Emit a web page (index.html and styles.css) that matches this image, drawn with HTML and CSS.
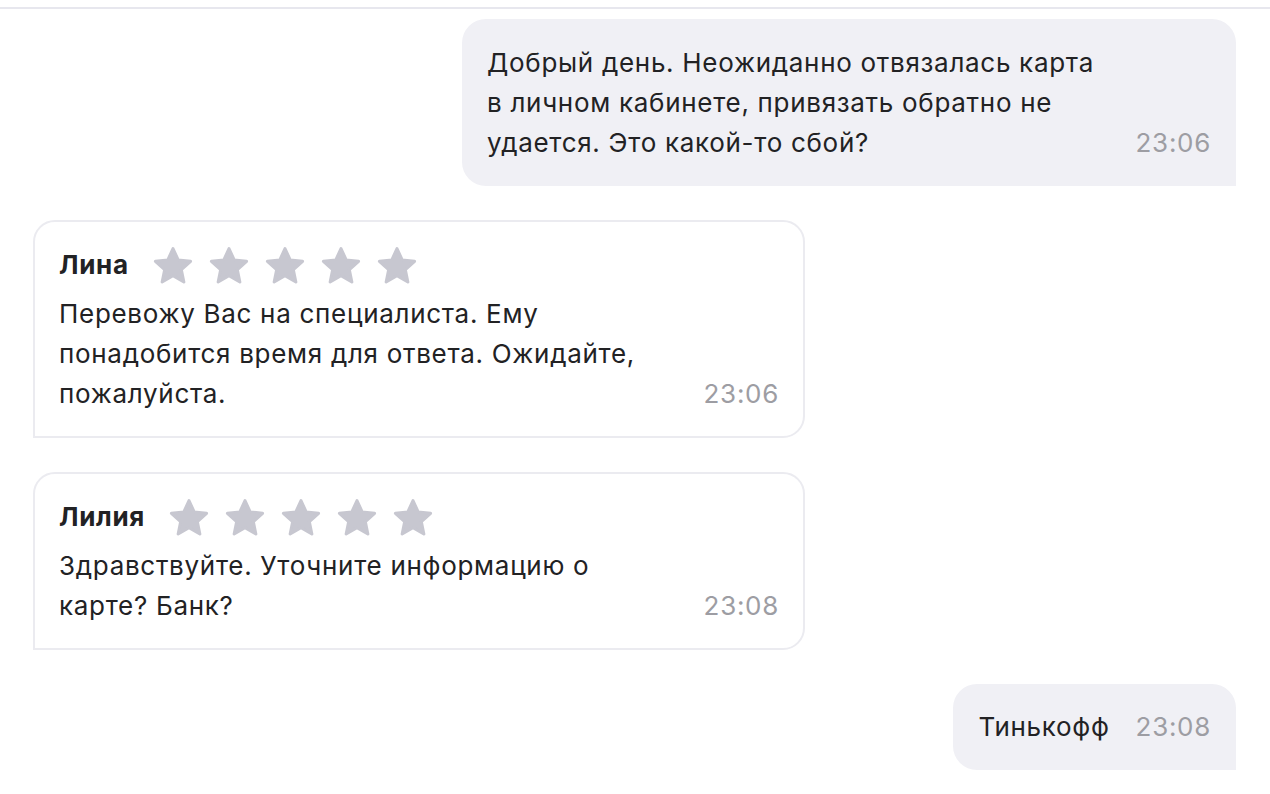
FILE: index.html
```html
<!DOCTYPE html>
<html lang="ru">
<head>
<meta charset="utf-8">
<title>Чат</title>
<link rel="stylesheet" href="styles.css">
</head>
<body>
<div class="chat">
  <div class="msg msg-out msg-wide">
    <div class="msg-text">Добрый день. Неожиданно отвязалась карта<br>в личном кабинете, привязать обратно не<br>удается. Это какой-то сбой?</div>
    <div class="msg-time">23:06</div>
  </div>

  <div class="msg msg-in">
    <div class="msg-head">
      <span class="msg-name">Лина</span>
      <div class="stars">
        <svg class="star" viewBox="0 0 40 40"><path d="M20 3.5L25.17 14.88 37.59 16.28 28.37 24.72 30.87 36.97 20 30.8 9.13 36.97 11.63 24.72 2.41 16.28 14.83 14.88Z"/></svg>
        <svg class="star" viewBox="0 0 40 40"><path d="M20 3.5L25.17 14.88 37.59 16.28 28.37 24.72 30.87 36.97 20 30.8 9.13 36.97 11.63 24.72 2.41 16.28 14.83 14.88Z"/></svg>
        <svg class="star" viewBox="0 0 40 40"><path d="M20 3.5L25.17 14.88 37.59 16.28 28.37 24.72 30.87 36.97 20 30.8 9.13 36.97 11.63 24.72 2.41 16.28 14.83 14.88Z"/></svg>
        <svg class="star" viewBox="0 0 40 40"><path d="M20 3.5L25.17 14.88 37.59 16.28 28.37 24.72 30.87 36.97 20 30.8 9.13 36.97 11.63 24.72 2.41 16.28 14.83 14.88Z"/></svg>
        <svg class="star" viewBox="0 0 40 40"><path d="M20 3.5L25.17 14.88 37.59 16.28 28.37 24.72 30.87 36.97 20 30.8 9.13 36.97 11.63 24.72 2.41 16.28 14.83 14.88Z"/></svg>
      </div>
    </div>
    <div class="msg-body">
      <div class="msg-text">Перевожу Вас на специалиста. Ему<br>понадобится время для ответа. Ожидайте,<br>пожалуйста.</div>
      <div class="msg-time">23:06</div>
    </div>
  </div>

  <div class="msg msg-in">
    <div class="msg-head">
      <span class="msg-name">Лилия</span>
      <div class="stars">
        <svg class="star" viewBox="0 0 40 40"><path d="M20 3.5L25.17 14.88 37.59 16.28 28.37 24.72 30.87 36.97 20 30.8 9.13 36.97 11.63 24.72 2.41 16.28 14.83 14.88Z"/></svg>
        <svg class="star" viewBox="0 0 40 40"><path d="M20 3.5L25.17 14.88 37.59 16.28 28.37 24.72 30.87 36.97 20 30.8 9.13 36.97 11.63 24.72 2.41 16.28 14.83 14.88Z"/></svg>
        <svg class="star" viewBox="0 0 40 40"><path d="M20 3.5L25.17 14.88 37.59 16.28 28.37 24.72 30.87 36.97 20 30.8 9.13 36.97 11.63 24.72 2.41 16.28 14.83 14.88Z"/></svg>
        <svg class="star" viewBox="0 0 40 40"><path d="M20 3.5L25.17 14.88 37.59 16.28 28.37 24.72 30.87 36.97 20 30.8 9.13 36.97 11.63 24.72 2.41 16.28 14.83 14.88Z"/></svg>
        <svg class="star" viewBox="0 0 40 40"><path d="M20 3.5L25.17 14.88 37.59 16.28 28.37 24.72 30.87 36.97 20 30.8 9.13 36.97 11.63 24.72 2.41 16.28 14.83 14.88Z"/></svg>
      </div>
    </div>
    <div class="msg-body">
      <div class="msg-text">Здравствуйте. Уточните информацию о<br>карте? Банк?</div>
      <div class="msg-time">23:08</div>
    </div>
  </div>

  <div class="msg msg-out">
    <div class="msg-text">Тинькофф</div>
    <div class="msg-time">23:08</div>
  </div>
</div>
</body>
</html>
```

FILE: styles.css
```css
html, body {
  margin: 0;
  padding: 0;
  background: #ffffff;
}

body {
  font-family: Inter, "Noto Sans", "Liberation Sans", sans-serif;
  font-size: 26px;
  letter-spacing: 0.7px;
  line-height: 40px;
  color: #222224;
  padding-top: 7px;
}

.chat {
  border-top: 2px solid #e7e7ee;
  padding: 10px 34px 20px 33px;
  display: flex;
  flex-direction: column;
  gap: 34px;
}

.msg {
  box-sizing: border-box;
}

.msg-out {
  align-self: flex-end;
  background: #f0f0f5;
  border-radius: 24px 24px 0 24px;
  padding: 23px 25px;
  display: flex;
  align-items: flex-end;
  gap: 26px;
}

.msg-wide {
  width: 774px;
  padding-top: 24px;
}

.msg-wide .msg-text {
  flex: 1;
}

.msg-in {
  align-self: flex-start;
  width: 772px;
  border: 2px solid #ebebf0;
  border-radius: 22px 22px 22px 0;
  padding: 23px 24px 22px 24px;
}

.msg-head {
  display: flex;
  align-items: center;
  gap: 24px;
  height: 40px;
  margin-bottom: 9px;
}

.msg-name {
  font-weight: 700;
}

.stars {
  display: flex;
  gap: 16px;
}

.star {
  width: 40px;
  height: 40px;
  display: block;
}

.star path {
  fill: #c7c7d0;
  stroke: #c7c7d0;
  stroke-width: 3;
  stroke-linejoin: round;
}

.msg-body {
  display: flex;
  align-items: flex-end;
  gap: 26px;
}

.msg-body .msg-text {
  flex: 1;
}

.msg-time {
  color: #9d9da3;
  white-space: nowrap;
}
```
